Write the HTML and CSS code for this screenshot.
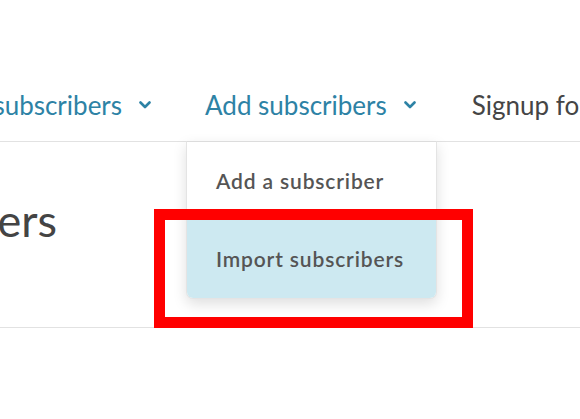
FILE: index.html
```html
<!DOCTYPE html>
<html lang="en">
<head>
<meta charset="utf-8">
<link rel="stylesheet" href="styles.css">
</head>
<body>
<div class="page">
  <nav class="nav">
    <div class="nav-item nav-first">
      <span class="nav-label">Manage subscribers</span>
      <svg class="chev" viewBox="0 0 12 8" width="12" height="8"><path d="M1.5 1.5 L6 6 L10.5 1.5" fill="none" stroke="currentColor" stroke-width="2.6" stroke-linecap="round" stroke-linejoin="round"/></svg>
    </div>
    <div class="nav-item nav-open">
      <span class="nav-label">Add subscribers</span>
      <svg class="chev" viewBox="0 0 12 8" width="12" height="8"><path d="M1.5 1.5 L6 6 L10.5 1.5" fill="none" stroke="currentColor" stroke-width="2.6" stroke-linecap="round" stroke-linejoin="round"/></svg>
      <div class="dropdown">
        <div class="dd-item">Add a subscriber</div>
        <div class="dd-item dd-active">Import subscribers</div>
      </div>
    </div>
    <div class="nav-item nav-plain">
      <span class="nav-label">Signup forms</span>
    </div>
  </nav>
  <section class="header">
    <h1 class="title"><span>Subscribers</span></h1>
  </section>
  <div class="highlight"></div>
</div>
</body>
</html>
```
FILE: styles.css
```css
html, body {
  margin: 0;
  padding: 0;
  background: #ffffff;
}
body {
  font-family: Lato, "Open Sans", "Liberation Sans", sans-serif;
}
.page {
  position: relative;
  width: 580px;
  height: 419px;
  overflow: hidden;
}
.nav {
  display: flex;
  align-items: flex-start;
  height: 142px;
  box-sizing: border-box;
  border-bottom: 1px solid #e2e2e2;
}
.nav-item {
  display: flex;
  flex-shrink: 0;
  align-items: center;
  gap: 17px;
  font-size: 26px;
  color: #2d82a5;
  white-space: nowrap;
  margin-top: 91px;
  height: 28px;
  line-height: 28px;
}
.nav-first {
  width: 400px;
  margin-left: -249px;
  justify-content: flex-end;
}
.nav-open {
  position: relative;
  margin-left: 54px;
}
.nav-plain {
  margin-left: 56px;
  color: #454545;
}
.chev {
  display: block;
  flex-shrink: 0;
  color: #2d82a5;
}
.dropdown {
  position: absolute;
  left: -19px;
  top: 50px;
  width: 249px;
  background: #ffffff;
  border: 1px solid #e4e4e4;
  border-top-color: #dcdcdc;
  border-radius: 0 0 7px 7px;
  box-shadow: 0 5px 14px rgba(0, 0, 0, 0.13);
  overflow: hidden;
  z-index: 2;
}
.dd-item {
  height: 78px;
  display: flex;
  align-items: center;
  padding-left: 29px;
  font-size: 21px;
  font-weight: 600;
  letter-spacing: 0.85px;
  color: #555555;
}
.dd-active {
  background: #cde9f1;
}
.header {
  height: 186px;
  border-bottom: 1px solid #e2e2e2;
  box-sizing: border-box;
}
.title {
  margin: 0;
  width: 400px;
  margin-left: -343px;
  padding-top: 56px;
  text-align: right;
  font-size: 45px;
  font-weight: 400;
  color: #444444;
  line-height: 1;
}
.highlight {
  position: absolute;
  left: 154px;
  top: 209px;
  width: 319px;
  height: 119px;
  box-sizing: border-box;
  border: 11px solid #ff0000;
  z-index: 3;
}
```
